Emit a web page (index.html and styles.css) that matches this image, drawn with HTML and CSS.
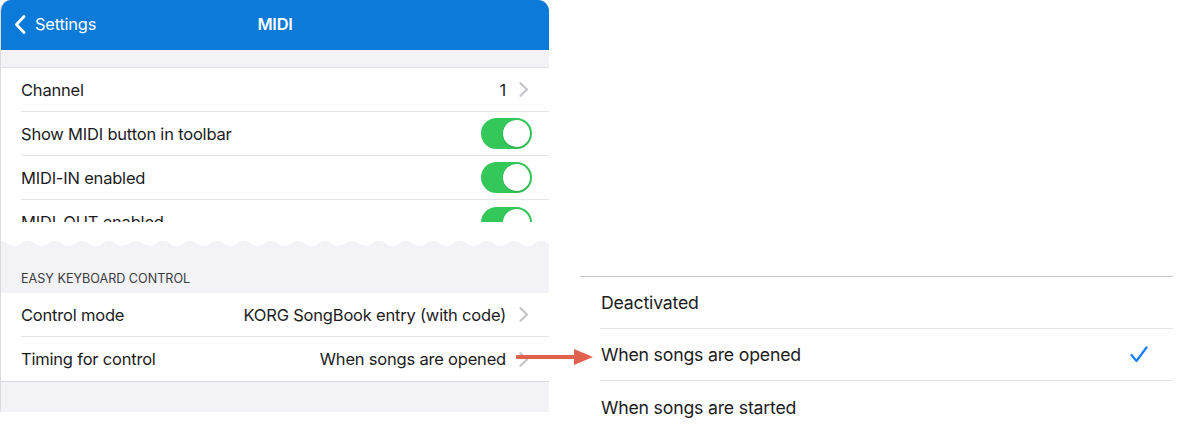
FILE: index.html
```html
<!DOCTYPE html>
<html lang="en">
<head>
<meta charset="utf-8">
<title>MIDI</title>
<link rel="stylesheet" href="styles.css">
</head>
<body>
<div class="stage">
  <section class="device">
    <header class="navbar">
      <div class="nav-left">
        <svg class="back" width="12" height="19" viewBox="0 0 12 19"><path d="M10 1.5 L2.5 9.5 L10 17.5"/></svg>
        <span>Settings</span>
      </div>
      <div class="nav-title">MIDI</div>
      <div class="nav-right"></div>
    </header>
    <div class="gap-top"></div>
    <div class="card">
      <div class="row"><div class="row-inner">
        <span class="label">Channel</span>
        <span class="value">1</span>
        <svg class="chev" width="10" height="15" viewBox="0 0 10 15"><path d="M1.5 1.2 L8 7.5 L1.5 13.8"/></svg>
      </div></div>
      <div class="row"><div class="row-inner">
        <span class="label">Show MIDI button in toolbar</span>
        <span class="toggle"><span class="knob"></span></span>
      </div></div>
      <div class="row"><div class="row-inner">
        <span class="label">MIDI-IN enabled</span>
        <span class="toggle"><span class="knob"></span></span>
      </div></div>
      <div class="row row-cut"><div class="row-inner">
        <span class="label">MIDI-OUT enabled</span>
        <span class="toggle"><span class="knob"></span></span>
      </div></div>
      <div class="tear-fill"></div>
    </div>
    <svg class="wave" width="548" height="9" viewBox="0 0 548 9" preserveAspectRatio="none">
      <defs>
        <pattern id="wv" x="0" y="0" width="27" height="9" patternUnits="userSpaceOnUse">
          <path d="M0 0 H27 V2 C20.25 2 20.25 7 13.5 7 C6.75 7 6.75 2 0 2 Z" fill="#ffffff"/>
        </pattern>
      </defs>
      <rect x="0" y="0" width="548" height="9" fill="url(#wv)"/>
    </svg>
    <div class="section-head">EASY KEYBOARD CONTROL</div>
    <div class="card card-lower">
      <div class="row"><div class="row-inner">
        <span class="label">Control mode</span>
        <span class="value">KORG SongBook entry (with code)</span>
        <svg class="chev" width="10" height="15" viewBox="0 0 10 15"><path d="M1.5 1.2 L8 7.5 L1.5 13.8"/></svg>
      </div></div>
      <div class="row row-last"><div class="row-inner">
        <span class="label">Timing for control</span>
        <span class="value">When songs are opened</span>
        <svg class="chev" width="10" height="15" viewBox="0 0 10 15"><path d="M1.5 1.2 L8 7.5 L1.5 13.8"/></svg>
      </div></div>
    </div>
    <div class="gap-bottom"></div>
  </section>

  <section class="picker">
    <div class="opt"><div class="opt-inner"><span>Deactivated</span></div></div>
    <div class="opt"><div class="opt-inner"><span>When songs are opened</span>
      <svg class="check" width="18" height="17" viewBox="0 0 18 17"><path d="M1.5 9 L6.5 15 L16.5 1.5"/></svg>
    </div></div>
    <div class="opt opt-last"><div class="opt-inner"><span>When songs are started</span></div></div>
  </section>

  <svg class="arrow" width="78" height="18" viewBox="0 0 78 18">
    <rect x="0" y="7" width="62" height="4" rx="1" fill="#e2604e"/>
    <path d="M58 1 L77 9 L58 17 Z" fill="#e2604e"/>
  </svg>
</div>
</body>
</html>
```

FILE: styles.css
```css
* { box-sizing: border-box; }

html, body {
  margin: 0;
  padding: 0;
  background: #ffffff;
}

body {
  font-family: "Inter", "Liberation Sans", sans-serif;
  color: #1c1c1e;
  width: 1177px;
  height: 435px;
  overflow: hidden;
}

.stage {
  position: relative;
  display: flex;
  align-items: flex-start;
}

/* ---------- left device ---------- */
.device {
  width: 549px;
  height: 412px;
  background: #f2f2f7;
  border-left: 1px solid #dcdce0;
  border-radius: 11px 11px 0 0;
  overflow: hidden;
  display: flex;
  flex-direction: column;
}

.navbar {
  height: 50px;
  flex: 0 0 50px;
  background: #0b7ad8;
  color: #ffffff;
  display: grid;
  grid-template-columns: 1fr auto 1fr;
  align-items: center;
  font-size: 16.4px;
  letter-spacing: -0.2px;
}

.nav-left {
  display: flex;
  align-items: center;
  gap: 9px;
  padding-left: 13px;
  padding-bottom: 2px;
}

.back path {
  fill: none;
  stroke: #ffffff;
  stroke-width: 2.8;
  stroke-linecap: round;
  stroke-linejoin: round;
}

.nav-title {
  font-weight: 600;
  padding-bottom: 2px;
}

.gap-top {
  height: 17px;
  flex: 0 0 17px;
}

.card {
  background: #ffffff;
  border-top: 1px solid #e2e2e7;
}

.row {
  height: 44px;
  padding-left: 20px;
}

.row-inner {
  height: 100%;
  display: flex;
  align-items: center;
  border-bottom: 1px solid #e2e2e7;
  padding-right: 17px;
  font-size: 16.5px;
  letter-spacing: -0.2px;
}

.label {
  flex: 1;
  white-space: nowrap;
}

.value {
  color: #1c1c1e;
  margin-right: 13px;
  white-space: nowrap;
}

.chev {
  margin-right: 3px;
  flex: 0 0 auto;
}

.chev path {
  fill: none;
  stroke: #c5c5c9;
  stroke-width: 2.2;
  stroke-linecap: round;
  stroke-linejoin: round;
}

.toggle {
  width: 51px;
  height: 31px;
  border-radius: 16px;
  background: #34c759;
  position: relative;
  flex: 0 0 auto;
}

.knob {
  position: absolute;
  right: 2px;
  top: 2px;
  width: 27px;
  height: 27px;
  border-radius: 50%;
  background: #ffffff;
  box-shadow: 0 1px 2px rgba(0,0,0,0.15);
}

.row-cut {
  height: 22px;
  overflow: hidden;
}

.row-cut .row-inner {
  height: 44px;
  border-bottom: none;
}

.tear-fill {
  height: 17px;
}

.wave {
  display: block;
  flex: 0 0 9px;
}

.section-head {
  padding: 23px 0 6px 20px;
  font-size: 12.6px;
  line-height: 16px;
  color: #3c3c43;
  letter-spacing: 0;
}

.card-lower {
  border-top: none;
  border-bottom: 1px solid #d9d9de;
}

.row-last .row-inner {
  border-bottom: none;
}

.gap-bottom {
  flex: 1;
}

/* ---------- right picker ---------- */
.picker {
  margin-left: 31px;
  margin-top: 276px;
  width: 593px;
  border-top: 1px solid #c8c8cc;
}

.opt {
  height: 52px;
  padding-left: 20px;
}

.opt-inner {
  height: 100%;
  display: flex;
  align-items: center;
  justify-content: space-between;
  border-bottom: 1px solid #e4e4e9;
  padding-left: 1px;
  padding-right: 25px;
  font-size: 17.7px;
  letter-spacing: -0.2px;
}

.opt-last .opt-inner {
  border-bottom: none;
}

.check path {
  fill: none;
  stroke: #147efb;
  stroke-width: 2.2;
  stroke-linecap: round;
  stroke-linejoin: round;
}

/* ---------- annotation arrow (overlay) ---------- */
.arrow {
  position: absolute;
  left: 516px;
  top: 348px;
}
```
